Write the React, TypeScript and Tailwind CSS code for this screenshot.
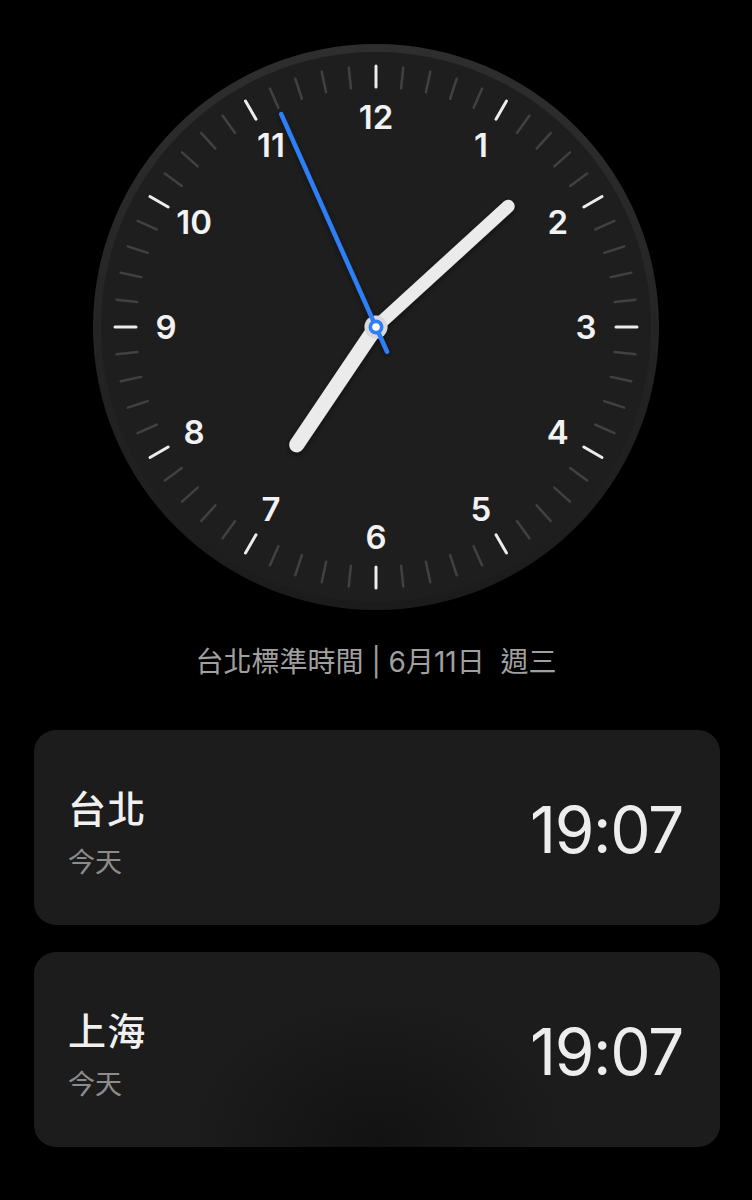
import React from 'react'

const CX = 283
const CY = 283

// 7:07:56
const SEC = 56
const MIN = 7 + SEC / 60
const HOUR = 7 + MIN / 60

function polar(angleDeg: number, r: number) {
    const a = (angleDeg * Math.PI) / 180
    return { x: CX + Math.sin(a) * r, y: CY - Math.cos(a) * r }
}

function Hand({ angle, length, tail = 0, width, color }: { angle: number; length: number; tail?: number; width: number; color: string }) {
    const tip = polar(angle, length)
    const back = polar(angle + 180, tail)
    return (
        <line x1={back.x} y1={back.y} x2={tip.x} y2={tip.y} stroke={color} strokeWidth={width} strokeLinecap="round" />
    )
}

function ClockFace() {
    const ticks = Array.from({ length: 60 }, (_, i) => i)
    const numbers = Array.from({ length: 12 }, (_, i) => i + 1)

    return (
        <svg viewBox="0 0 566 566" className="w-[566px] h-[566px]">
            <defs>
                <linearGradient id="rim" x1="0" y1="0" x2="0" y2="1">
                    <stop offset="0" stopColor="#2e2e2e" />
                    <stop offset="1" stopColor="#1b1b1b" />
                </linearGradient>
                <filter id="handShadow" x="-20%" y="-20%" width="140%" height="140%">
                    <feDropShadow dx="0" dy="2" stdDeviation="3" floodColor="#000" floodOpacity="0.5" />
                </filter>
            </defs>

            {/* rim + face */}
            <circle cx={CX} cy={CY} r={283} fill="url(#rim)" />
            <circle cx={CX} cy={CY} r={275} fill="#1e1e1e" />

            {/* ticks */}
            {ticks.map((i) => {
                const hour = i % 5 === 0
                const a = polar(i * 6, 240)
                const b = polar(i * 6, 261)
                return (
                    <line
                        key={i}
                        x1={a.x}
                        y1={a.y}
                        x2={b.x}
                        y2={b.y}
                        stroke={hour ? '#ececec' : '#414141'}
                        strokeWidth={hour ? 3 : 2.5}
                        strokeLinecap="round"
                    />
                )
            })}

            {/* numbers */}
            {numbers.map((n) => {
                const p = polar(n * 30, 210)
                return (
                    <text
                        key={n}
                        x={p.x}
                        y={p.y}
                        textAnchor="middle"
                        dominantBaseline="central"
                        fill="#f2f2f2"
                        fontSize={33}
                        fontWeight={600}
                        fontFamily="Inter, 'Open Sans', sans-serif"
                    >
                        {n}
                    </text>
                )
            })}

            {/* hands */}
            <g filter="url(#handShadow)">
                <Hand angle={HOUR * 30} length={142} width={15} color="#ebebeb" />
                <Hand angle={MIN * 6} length={179} width={13} color="#ebebeb" />
                <circle cx={CX} cy={CY} r={11.5} fill="#d9d9d9" />
                <Hand angle={SEC * 6} length={233} tail={27} width={4.5} color="#2f7ef7" />
                <circle cx={CX} cy={CY} r={7.5} fill="#2f7ef7" />
                <circle cx={CX} cy={CY} r={3.8} fill="#ffffff" />
            </g>
        </svg>
    )
}

function CityCard({ city, time, shade = false }: { city: string; time: string; shade?: boolean }) {
    return (
        <div
            className={`h-[195px] rounded-[22px] flex items-center justify-between pl-[34px] pr-[37px] ${shade
                ? 'bg-[radial-gradient(ellipse_190px_150px_at_50%_100%,#121212,#1c1c1c)]'
                : 'bg-[#1c1c1c]'
                }`}
        >
            <div className="flex flex-col mt-[8px]">
                <span className="text-[38px] leading-[44px] tracking-[0.03em] font-medium text-[#f0f0f0] font-['Noto_Sans_CJK_TC',sans-serif]">
                    {city}
                </span>
                <span className="mt-[14px] text-[27px] leading-[36px] text-[#8c8c8c] font-['Noto_Sans_CJK_TC',sans-serif]">
                    今天
                </span>
            </div>
            <span className="text-[64px] leading-none tracking-[-0.02em] text-[#ededed] font-['Inter',sans-serif] mt-[4px]">
                {time}
            </span>
        </div>
    )
}

export default function App() {
    return (
        <div className="min-h-[1200px] bg-black pt-[44px]">
            {/* Analog clock */}
            <div className="w-[566px] h-[566px] mx-auto">
                <ClockFace />
            </div>

            {/* Zone + date */}
            <p className="mt-[33px] text-center text-[28px] leading-[38px] text-[#a0a0a0] whitespace-pre font-['Inter','Noto_Sans_CJK_TC',sans-serif]">
                台北標準時間 | 6月11日  週三
            </p>

            {/* World clock list */}
            <div className="mt-[49px] ml-[34px] mr-[32px] flex flex-col gap-[27px]">
                <CityCard city="台北" time="19:07" />
                <CityCard city="上海" time="19:07" shade />
            </div>
        </div>
    )
}
